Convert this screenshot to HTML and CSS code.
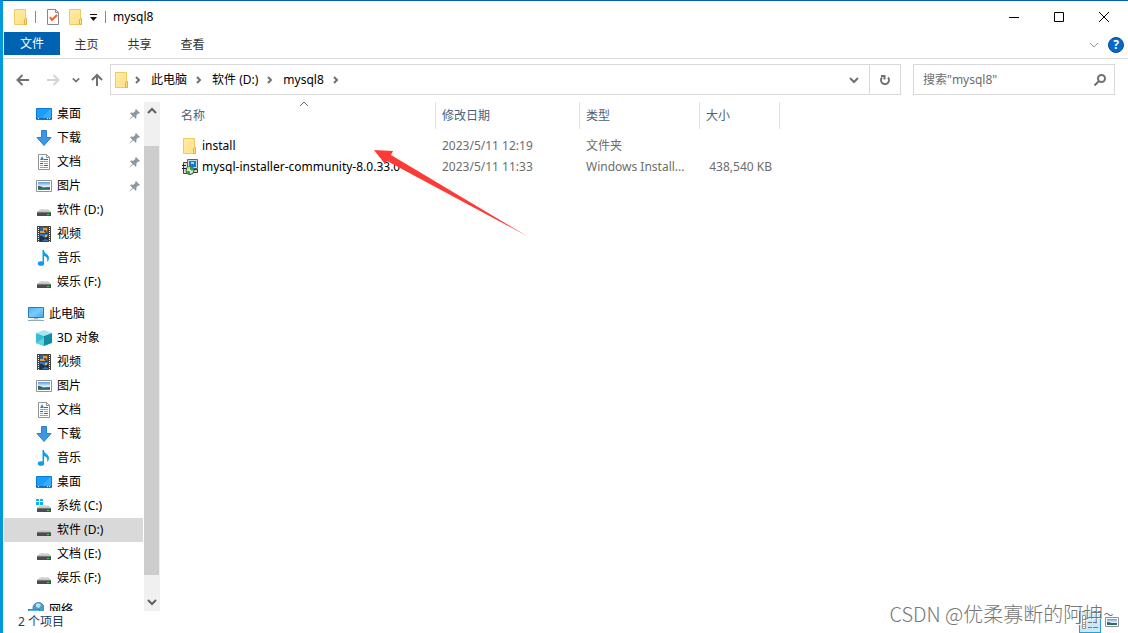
FILE: index.html
```
<!DOCTYPE html>
<html lang="zh-CN">
<head>
<meta charset="utf-8">
<title>mysql8</title>
<link rel="stylesheet" href="styles.css">
</head>
<body>
<svg class="defs" aria-hidden="true">
  <defs>
    <linearGradient id="gFolder" x2="1" y2="1"><stop offset="0" stop-color="#ffeca8"/><stop offset="1" stop-color="#ffdf82"/></linearGradient>
    <linearGradient id="gDrive" x2="0" y2="1"><stop offset="0" stop-color="#e3e5e6"/><stop offset="1" stop-color="#b9bdc0"/></linearGradient>
    <linearGradient id="gSky" x2="0" y2="1"><stop offset="0" stop-color="#5b9be6"/><stop offset=".55" stop-color="#e6f3fc"/><stop offset="1" stop-color="#2b6d8c"/></linearGradient>
    <linearGradient id="gScreen" x2="1" y2="1"><stop offset="0" stop-color="#45b4f5"/><stop offset=".5" stop-color="#7ccbfa"/><stop offset="1" stop-color="#3fa6ee"/></linearGradient>
    <symbol id="folder" viewBox="0 0 16 16"><path d="M1.500.5h11v9h1v6h-12z" fill="url(#gFolder)" stroke="#eccb62"/><path d="M11.500 15.500v-5l1-1h1v6z" fill="#fbe08a" stroke="#dfb43e"/></symbol>
    <symbol id="desktop" viewBox="0 0 16 16"><path d="M.5 2.500h15v11H.5z" fill="#1b9dfb" stroke="#0b79cf"/><path d="M6 12 14 3h1v9z" fill="#38aefc"/><path d="M1 12.500h14" stroke="#0a6fc4"/><path d="M2 12.500h1m8 0h1m1 0h1" stroke="#d7f0ff"/></symbol>
    <symbol id="download" viewBox="0 0 16 16"><path d="M5.500.5h5v7h4.500L8 15.500 1 7.500h4.500z" fill="#3d95e6" stroke="#2d7fcd"/></symbol>
    <symbol id="doc" viewBox="0 0 16 16"><path d="M2.500.5h8l3 3v12h-11z" fill="#fff" stroke="#929292"/><path d="M10.500.5v3h3" fill="none" stroke="#929292"/><path d="m4 6 2-4 2 4z" fill="#238cd1"/><path d="M4 7.500h8M4 9.500h3m1 0h4M4 11.500h3m1 0h4M4 13.500h8" stroke="#6caedb"/><path d="M8 5.500h4M8 11.500h4M4 9.500h3" stroke="#386e91"/></symbol>
    <symbol id="picture" viewBox="0 0 16 16"><path d="M.5 2.500h15v11H.5z" fill="#fff" stroke="#929292"/><path d="M2 4h12v8H2z" fill="url(#gSky)"/><path d="M2 8q3-.5 5 1.500l7-.5v3H2z" fill="#2f6b62"/><path d="M2 11h12v1H2z" fill="#397ab0"/></symbol>
    <symbol id="drive" viewBox="0 0 16 16"><path d="M4 7h8l3 3H1z" fill="url(#gDrive)"/><path d="M1 10h14v4H1z" fill="#4a4d4f"/><path d="M1 10h14v1H1z" fill="#737779"/><path d="M11 12h2v1h-2z" fill="#34e052"/></symbol>
    <symbol id="sysdrive" viewBox="0 0 16 16"><use href="#drive"/><path d="M0 0h7v7H0z" fill="#fff"/><path d="M0 1h3v2H0zm4 0h3v2H4zM0 4h3v3H0zm4 0h3v3H4z" fill="#10b3e9"/></symbol>
    <symbol id="video" viewBox="0 0 16 16"><path d="M1 0h14v16H1z" fill="#424242"/><path d="M2.500 1v15M13.500 1v15" stroke="#fff" stroke-dasharray="1 1"/><path d="M4 1h8v6H4z" fill="#355f9d"/><path d="M4 8h8v7H4z" fill="#3975bd"/><path d="M4 5h5v2H4zm3-3h4v3H7z" fill="#d4a638"/><path d="M8 4h2v2H8z" fill="#a43223"/><path d="M4 10h2l3 2 3-2v4l-3-1-3 2H4z" fill="#19334c"/><path d="M9 9h2v2H9z" fill="#e5b642"/></symbol>
    <symbol id="music" viewBox="0 0 16 16"><ellipse cx="5" cy="13.500" rx="3.200" ry="2.300" fill="#119bed"/><path d="M6.500 0H8c0 4 5 4 5 8 0 2-1 3-2 4 1-4-.5-5-3-6v8H6.500z" fill="#119bed"/></symbol>
    <symbol id="pc" viewBox="0 0 16 16"><path d="M.5 1.500h15v10H.5z" fill="url(#gScreen)" stroke="#267fb9"/><path d="M6 12h4v1H6z" fill="#9fb2bf"/><path d="M0 14.500h16" stroke="#8daabd"/><path d="M3 13.500h10" stroke="#d5e3eb"/></symbol>
    <symbol id="cube" viewBox="0 0 16 16"><path d="m0 3 8-3 8 3-8 3z" fill="#a4e9f0"/><path d="m0 3 8 3v10l-8-3z" fill="#35bfd4"/><path d="m16 3-8 3v10l8-3z" fill="#138ca6"/><path d="m0 13 8-5v8z" fill="#62d2df"/></symbol>
    <symbol id="network" viewBox="0 0 16 16"><circle cx="10.500" cy="6" r="5.500" fill="#4f9ccb" stroke="#3f83b6"/><path d="M8 2q3-2 5 1l-2 3-3-1z" fill="#b7e2ee"/><path d="M0 7h12v6H0z" fill="#2e88c5"/><path d="M1 8h10v4H1z" fill="#58b9ef"/></symbol>
    <symbol id="pin" viewBox="0 0 12 12"><path d="m7 1 4 4-1 .7-1-.1L7.300 7.500l.2 2.300-.9.900L4.200 8.300.8 11.400l-.3-.3 3-3.400-2.300-2.300.9-.9 2.400.2L6.300 3l-.1-1z" fill="#8b98a2"/></symbol>
    <symbol id="msi" viewBox="0 0 16 16"><path d="M1.500 3.500h4v11h-4z" fill="#ddd" stroke="#444"/><path d="M0 6.500h4M0 9.500h4" stroke="#222"/><path d="M5.500.5h10v9h-10z" fill="#cfd8dd" stroke="#56636b"/><path d="M7 2h7v6H7z" fill="#087edb"/><path d="M9 3h3v2H9z" fill="#8ce8fa"/><path d="M12 10.500h3.500v3H12" fill="#ddd" stroke="#333"/><circle cx="8" cy="11.500" r="4" fill="#d8e7cf" stroke="#283b35"/><path d="M8 7.500a4 4 0 0 1 4 4H8zM8 15.500a4 4 0 0 1-4-3l4-1z" fill="#21a642"/><path d="m8 11.500-3-3 3-1z" fill="#ead94a"/><circle cx="8" cy="11.500" r="1" fill="#fff"/></symbol>
    <symbol id="right" viewBox="0 0 8 8"><path d="m2 1 3 3-3 3" class="stroke"/></symbol>
    <symbol id="down" viewBox="0 0 10 10"><path d="m1 3 4 4 4-4" class="stroke"/></symbol>
    <symbol id="up" viewBox="0 0 10 10"><path d="m1 7 4-4 4 4" class="stroke"/></symbol>
    <symbol id="arrow" viewBox="0 0 14 14"><path d="M13 7H1.500m5-5-5 5 5 5" class="stroke"/></symbol>
  </defs>
</svg>
<div class="window">
  <header class="titlebar">
    <svg class="i16"><use href="#folder"/></svg>
    <span class="bar first"></span>
    <button class="plain" aria-label="属性"><svg class="i16" viewBox="0 0 16 16"><path d="M2.500.5h8l3 3v12h-11z" fill="#fff" stroke="#888"/><path d="M10.500.5v3h3" fill="none" stroke="#888"/><path d="m5 8 2 3 5-5" fill="none" stroke="#e8622c" stroke-width="2"/></svg></button>
    <button class="plain newfolder" aria-label="新建文件夹"><svg class="i16"><use href="#folder"/></svg></button>
    <button class="plain custom" aria-label="自定义快速访问工具栏"><svg class="i8" viewBox="0 0 8 8"><path d="M1 1.500h7" stroke="#111"/><path d="M1 4h7L4.500 8z" fill="#111"/></svg></button>
    <span class="bar"></span>
    <h1>mysql8</h1>
    <div class="controls">
      <button class="plain" aria-label="最小化"><svg class="i12" viewBox="0 0 12 12"><path d="M1 6.500h10" stroke="#000"/></svg></button>
      <button class="plain" aria-label="最大化"><svg class="i12" viewBox="0 0 12 12"><path d="M1.500 1.500h9v9h-9z" stroke="#000" fill="none"/></svg></button>
      <button class="plain" aria-label="关闭"><svg class="i12" viewBox="0 0 12 12"><path d="m1 1 10 10m0-10L1 11" stroke="#000"/></svg></button>
    </div>
  </header>
  <nav class="tabs">
    <button class="tab file">文件</button>
    <button class="tab">主页</button>
    <button class="tab">共享</button>
    <button class="tab">查看</button>
    <div class="help">
      <button class="plain expand" aria-label="展开功能区"><svg class="i10"><use href="#down"/></svg></button>
      <button class="question" aria-label="帮助">?</button>
    </div>
  </nav>
  <div class="addressrow">
    <button class="plain back" aria-label="后退"><svg class="i14"><use href="#arrow"/></svg></button>
    <button class="plain forward" aria-label="前进"><svg class="i14"><use href="#arrow"/></svg></button>
    <button class="plain recent" aria-label="最近的位置"><svg class="i8"><use href="#down"/></svg></button>
    <button class="plain parent" aria-label="上移"><svg class="i14" viewBox="0 0 14 14"><path d="M7 13V2M2 7l5-5 5 5" class="stroke"/></svg></button>
    <div class="address">
      <svg class="i16"><use href="#folder"/></svg>
      <svg class="i8 lead"><use href="#right"/></svg>
      <a href="#">此电脑</a><svg class="i8"><use href="#right"/></svg>
      <a href="#">软件 (D:)</a><svg class="i8"><use href="#right"/></svg>
      <a href="#">mysql8</a><svg class="i8"><use href="#right"/></svg>
      <button class="plain drop" aria-label="以前的位置"><svg class="i10"><use href="#down"/></svg></button>
      <button class="plain refresh" aria-label="刷新"><svg class="i12" viewBox="0 0 12 12"><path d="M3 3.500A4 4 0 1 0 9 3.500M2 2h3.500v3.500" class="stroke"/></svg></button>
    </div>
    <div class="search">
      <input type="text" placeholder='搜索"mysql8"' aria-label="搜索">
      <button class="plain" aria-label="搜索"><svg class="i12" viewBox="0 0 12 12"><circle cx="7.500" cy="4.500" r="3.500" class="stroke"/><path d="M5 7 .5 11.500" class="stroke"/></svg></button>
    </div>
  </div>
  <main class="content">
    <aside class="sidebar">
      <ul class="group">
        <li><a href="#"><svg class="i16"><use href="#desktop"/></svg>桌面<svg class="pin"><use href="#pin"/></svg></a></li>
        <li><a href="#"><svg class="i16"><use href="#download"/></svg>下载<svg class="pin"><use href="#pin"/></svg></a></li>
        <li><a href="#"><svg class="i16"><use href="#doc"/></svg>文档<svg class="pin"><use href="#pin"/></svg></a></li>
        <li><a href="#"><svg class="i16"><use href="#picture"/></svg>图片<svg class="pin"><use href="#pin"/></svg></a></li>
        <li><a href="#"><svg class="i16"><use href="#drive"/></svg>软件 (D:)</a></li>
        <li><a href="#"><svg class="i16"><use href="#video"/></svg>视频</a></li>
        <li><a href="#"><svg class="i16"><use href="#music"/></svg>音乐</a></li>
        <li><a href="#"><svg class="i16"><use href="#drive"/></svg>娱乐 (F:)</a></li>
      </ul>
      <ul class="group">
        <li><a href="#" class="root"><svg class="i16"><use href="#pc"/></svg>此电脑</a></li>
        <li><a href="#"><svg class="i16"><use href="#cube"/></svg>3D 对象</a></li>
        <li><a href="#"><svg class="i16"><use href="#video"/></svg>视频</a></li>
        <li><a href="#"><svg class="i16"><use href="#picture"/></svg>图片</a></li>
        <li><a href="#"><svg class="i16"><use href="#doc"/></svg>文档</a></li>
        <li><a href="#"><svg class="i16"><use href="#download"/></svg>下载</a></li>
        <li><a href="#"><svg class="i16"><use href="#music"/></svg>音乐</a></li>
        <li><a href="#"><svg class="i16"><use href="#desktop"/></svg>桌面</a></li>
        <li><a href="#"><svg class="i16"><use href="#sysdrive"/></svg>系统 (C:)</a></li>
        <li><a href="#" class="selected"><svg class="i16"><use href="#drive"/></svg>软件 (D:)</a></li>
        <li><a href="#"><svg class="i16"><use href="#drive"/></svg>文档 (E:)</a></li>
        <li><a href="#"><svg class="i16"><use href="#drive"/></svg>娱乐 (F:)</a></li>
      </ul>
      <ul class="group">
        <li><a href="#" class="root"><svg class="i16"><use href="#network"/></svg>网络</a></li>
      </ul>
    </aside>
    <div class="scrollbar">
      <button class="plain" aria-label="向上滚动"><svg class="i10"><use href="#up"/></svg></button>
      <div class="track"><div class="thumb"></div></div>
      <button class="plain" aria-label="向下滚动"><svg class="i10"><use href="#down"/></svg></button>
    </div>
    <section class="files">
      <table>
        <colgroup><col class="c-name"><col class="c-date"><col class="c-type"><col class="c-size"></colgroup>
        <thead><tr><th class="h-name">名称<svg class="sort"><use href="#up"/></svg></th><th>修改日期</th><th>类型</th><th>大小</th></tr></thead>
        <tbody>
          <tr><td class="name"><svg class="i16"><use href="#folder"/></svg>install</td><td>2023/5/11 12:19</td><td>文件夹</td><td></td></tr>
          <tr><td class="name"><svg class="i16"><use href="#msi"/></svg>mysql-installer-community-8.0.33.0</td><td>2023/5/11 11:33</td><td>Windows Install...</td><td class="size">438,540 KB</td></tr>
        </tbody>
      </table>
      <svg class="pointer" viewBox="0 0 154 87" aria-hidden="true"><path d="M0 0 19 1l-2 4L153 86 13 11l-2 3z" fill="#fc3a36"/></svg>
    </section>
  </main>
  <footer class="status">
    <span>2 个项目</span>
    <div class="views">
      <button class="view active" aria-label="详细信息"><svg class="i16" viewBox="0 0 16 16"><path d="M.5 1.500h3v13h-3zM.5 5.500h3M.5 10.500h3" fill="#fff" stroke="#999"/><path d="M6 3.500h4m1 0h5M6 8.500h4m1 0h5M6 13.500h4m1 0h5" stroke="#777"/><path d="M1.500 8.500h1m-1 4h1" stroke="#d52"/></svg></button>
      <button class="view" aria-label="大缩略图"><svg class="i14" viewBox="1 1 14 14"><path d="M1.500 3.500h13v9h-13z" fill="#fff" stroke="#929292"/><path d="M3 5h10v6H3z" fill="url(#gSky)"/><path d="M3 8q3 0 4 1l6 0v2H3z" fill="#2f6b62"/></svg></button>
    </div>
  </footer>
  <div class="watermark">CSDN @优柔寡断的阿坤~</div>
</div>
</body>
</html>
```
FILE: styles.css
```
* { box-sizing: border-box; }
body {
  margin: 0;
  font: 12px/16px "Noto Sans", "Noto Sans CJK SC", sans-serif;
  color: #000;
  background: #fff;
}
button, input { font: inherit; color: inherit; }
a { color: inherit; text-decoration: none; }
svg { flex: none; display: block; }
.defs { position: absolute; width: 0; height: 0; }
.stroke { fill: none; stroke: currentColor; stroke-width: inherit; }
.i8 { width: 8px; height: 8px; }
.i10 { width: 10px; height: 10px; }
.i12 { width: 12px; height: 12px; }
.i14 { width: 14px; height: 14px; }
.i16 { width: 16px; height: 16px; }
.plain {
  display: flex;
  align-items: center;
  justify-content: center;
  padding: 0;
  border: 0;
  background: none;
}
.window {
  position: relative;
  display: flex;
  flex-direction: column;
  height: 100vh;
  border-left: 3px solid #0099dc;
  border-top: 1px solid #0060b6;
  overflow: hidden;
}

.titlebar { display: flex; align-items: center; height: 31px; padding-left: 10px; }
.titlebar .bar { width: 1px; height: 12px; margin: 0 7px 0 8px; background: #888; }
.titlebar .first { margin: 0 9px 0 6px; }
.newfolder { margin-left: 7px; }
.custom { margin-left: 5px; }
.titlebar h1 { margin: 0; font-size: 12px; font-weight: 400; }
.controls { display: flex; margin-left: auto; padding-right: 2px; }
.controls button { width: 45px; height: 30px; }

.tabs {
  display: flex;
  height: 27px;
  padding: 0 4px 0 1px;
  border-bottom: 1px solid #dadbdc;
}
.tab {
  width: 53px;
  height: 24px;
  padding: 1px 0 0;
  border: 0;
  background: none;
  color: #333;
}
.tab.file { width: 56px; height: 23px; color: #fff; background: #0063b1; }
.help { display: flex; align-items: center; gap: 9px; margin-left: auto; color: #999; }
.question {
  width: 16px;
  height: 16px;
  padding: 0;
  border: 1px solid #07509b;
  border-radius: 50%;
  background: #0669c7;
  color: #fff;
  font-weight: 700;
  line-height: 14px;
}

.addressrow {
  display: flex;
  align-items: center;
  padding: 5px 13px 7px 13px;
  color: #707070;
}
.back, .forward, .parent { width: 14px; stroke-width: 2; }
.forward { margin-left: 16px; color: #d5d5d5; transform: rotate(180deg); }
.recent { margin-left: 12px; stroke-width: 2; }
.parent { margin: 0 6px 0 10px; }
.address {
  display: flex;
  flex: 1;
  align-items: center;
  height: 31px;
  padding-left: 3px;
  border: 1px solid #d9d9d9;
}
.address > .i8 { margin: 0 9px 0 8px; stroke-width: 2; }
.address > .lead { margin-left: 4px; }
.address a { color: #000; }
.drop { width: 30px; height: 29px; margin-left: auto; stroke-width: 2; }
.refresh { width: 31px; height: 29px; border-left: 1px solid #d9d9d9; stroke-width: 2; }
.search {
  display: flex;
  width: 202px;
  height: 31px;
  margin-left: 12px;
  padding: 0 8px 0 9px;
  border: 1px solid #d9d9d9;
  stroke-width: 2;
}
.search input { flex: 1; min-width: 0; padding: 0; border: 0; outline: 0; background: none; }
.search input::placeholder { color: #6d6d6d; opacity: 1; }

.content { display: flex; flex: 1; min-height: 0; }
.sidebar { width: 140px; margin-left: 1px; overflow: hidden; }
.group { margin: 0 0 8px; padding: 0; list-style: none; }
.group a {
  display: flex;
  align-items: center;
  gap: 5px;
  height: 24px;
  padding: 0 3px 0 32px;
}
.group .root { padding-left: 24px; }
.group .selected { margin-right: 1px; background: #d9d9d9; }
.pin { width: 12px; height: 12px; margin-left: auto; }
.scrollbar {
  display: flex;
  flex-direction: column;
  width: 16px;
  background: #f0f0f0;
  color: #606060;
  stroke-width: 2;
}
.scrollbar button { width: 15px; height: 18px; }
.track { flex: 1; padding-top: 26px; }
.thumb { width: 15px; height: 96%; background: #cdcdcd; }

.files { position: relative; flex: 1; padding-left: 14px; }
table { width: 606px; table-layout: fixed; border-collapse: separate; border-spacing: 0; }
.c-name { width: 262px; }
.c-date { width: 144px; }
.c-type { width: 120px; }
.c-size { width: 80px; }
th {
  position: relative;
  height: 27px;
  padding: 0 0 0 6px;
  border-right: 1px solid #e0e0e0;
  text-align: left;
  font-weight: 400;
  color: #4c607a;
}
th.h-name { padding-left: 7px; }
.sort { position: absolute; top: -3px; left: 48%; width: 10px; height: 10px; color: #666; }
tbody::before { content: ""; display: block; height: 6px; }
td {
  height: 21px;
  padding: 0 12px 0 6px;
  overflow: hidden;
  white-space: nowrap;
  text-overflow: ellipsis;
  color: #6d6d6d;
}
td.name { display: flex; align-items: center; gap: 4px; padding: 0 0 0 8px; color: #000; }
td.size { padding: 0 8px 0 0; text-align: right; }
.pointer { position: absolute; left: 214px; top: 48px; width: 154px; height: 87px; }

.status {
  display: flex;
  align-items: center;
  justify-content: space-between;
  height: 22px;
  padding: 0 5px 0 15px;
  color: #1e395b;
}
.views { display: flex; }
.view {
  display: flex;
  align-items: center;
  justify-content: center;
  width: 22px;
  height: 22px;
  padding: 0;
  border: 1px solid transparent;
  background: none;
}
.view.active { border-color: #26a0da; background: #cce8f7; }
.watermark {
  position: absolute;
  right: 14px;
  bottom: 5px;
  font: 300 20px/28px "Noto Sans CJK SC", sans-serif;
  color: #777;
  text-shadow: 1px 1px 0 #fff;
  pointer-events: none;
}
```
